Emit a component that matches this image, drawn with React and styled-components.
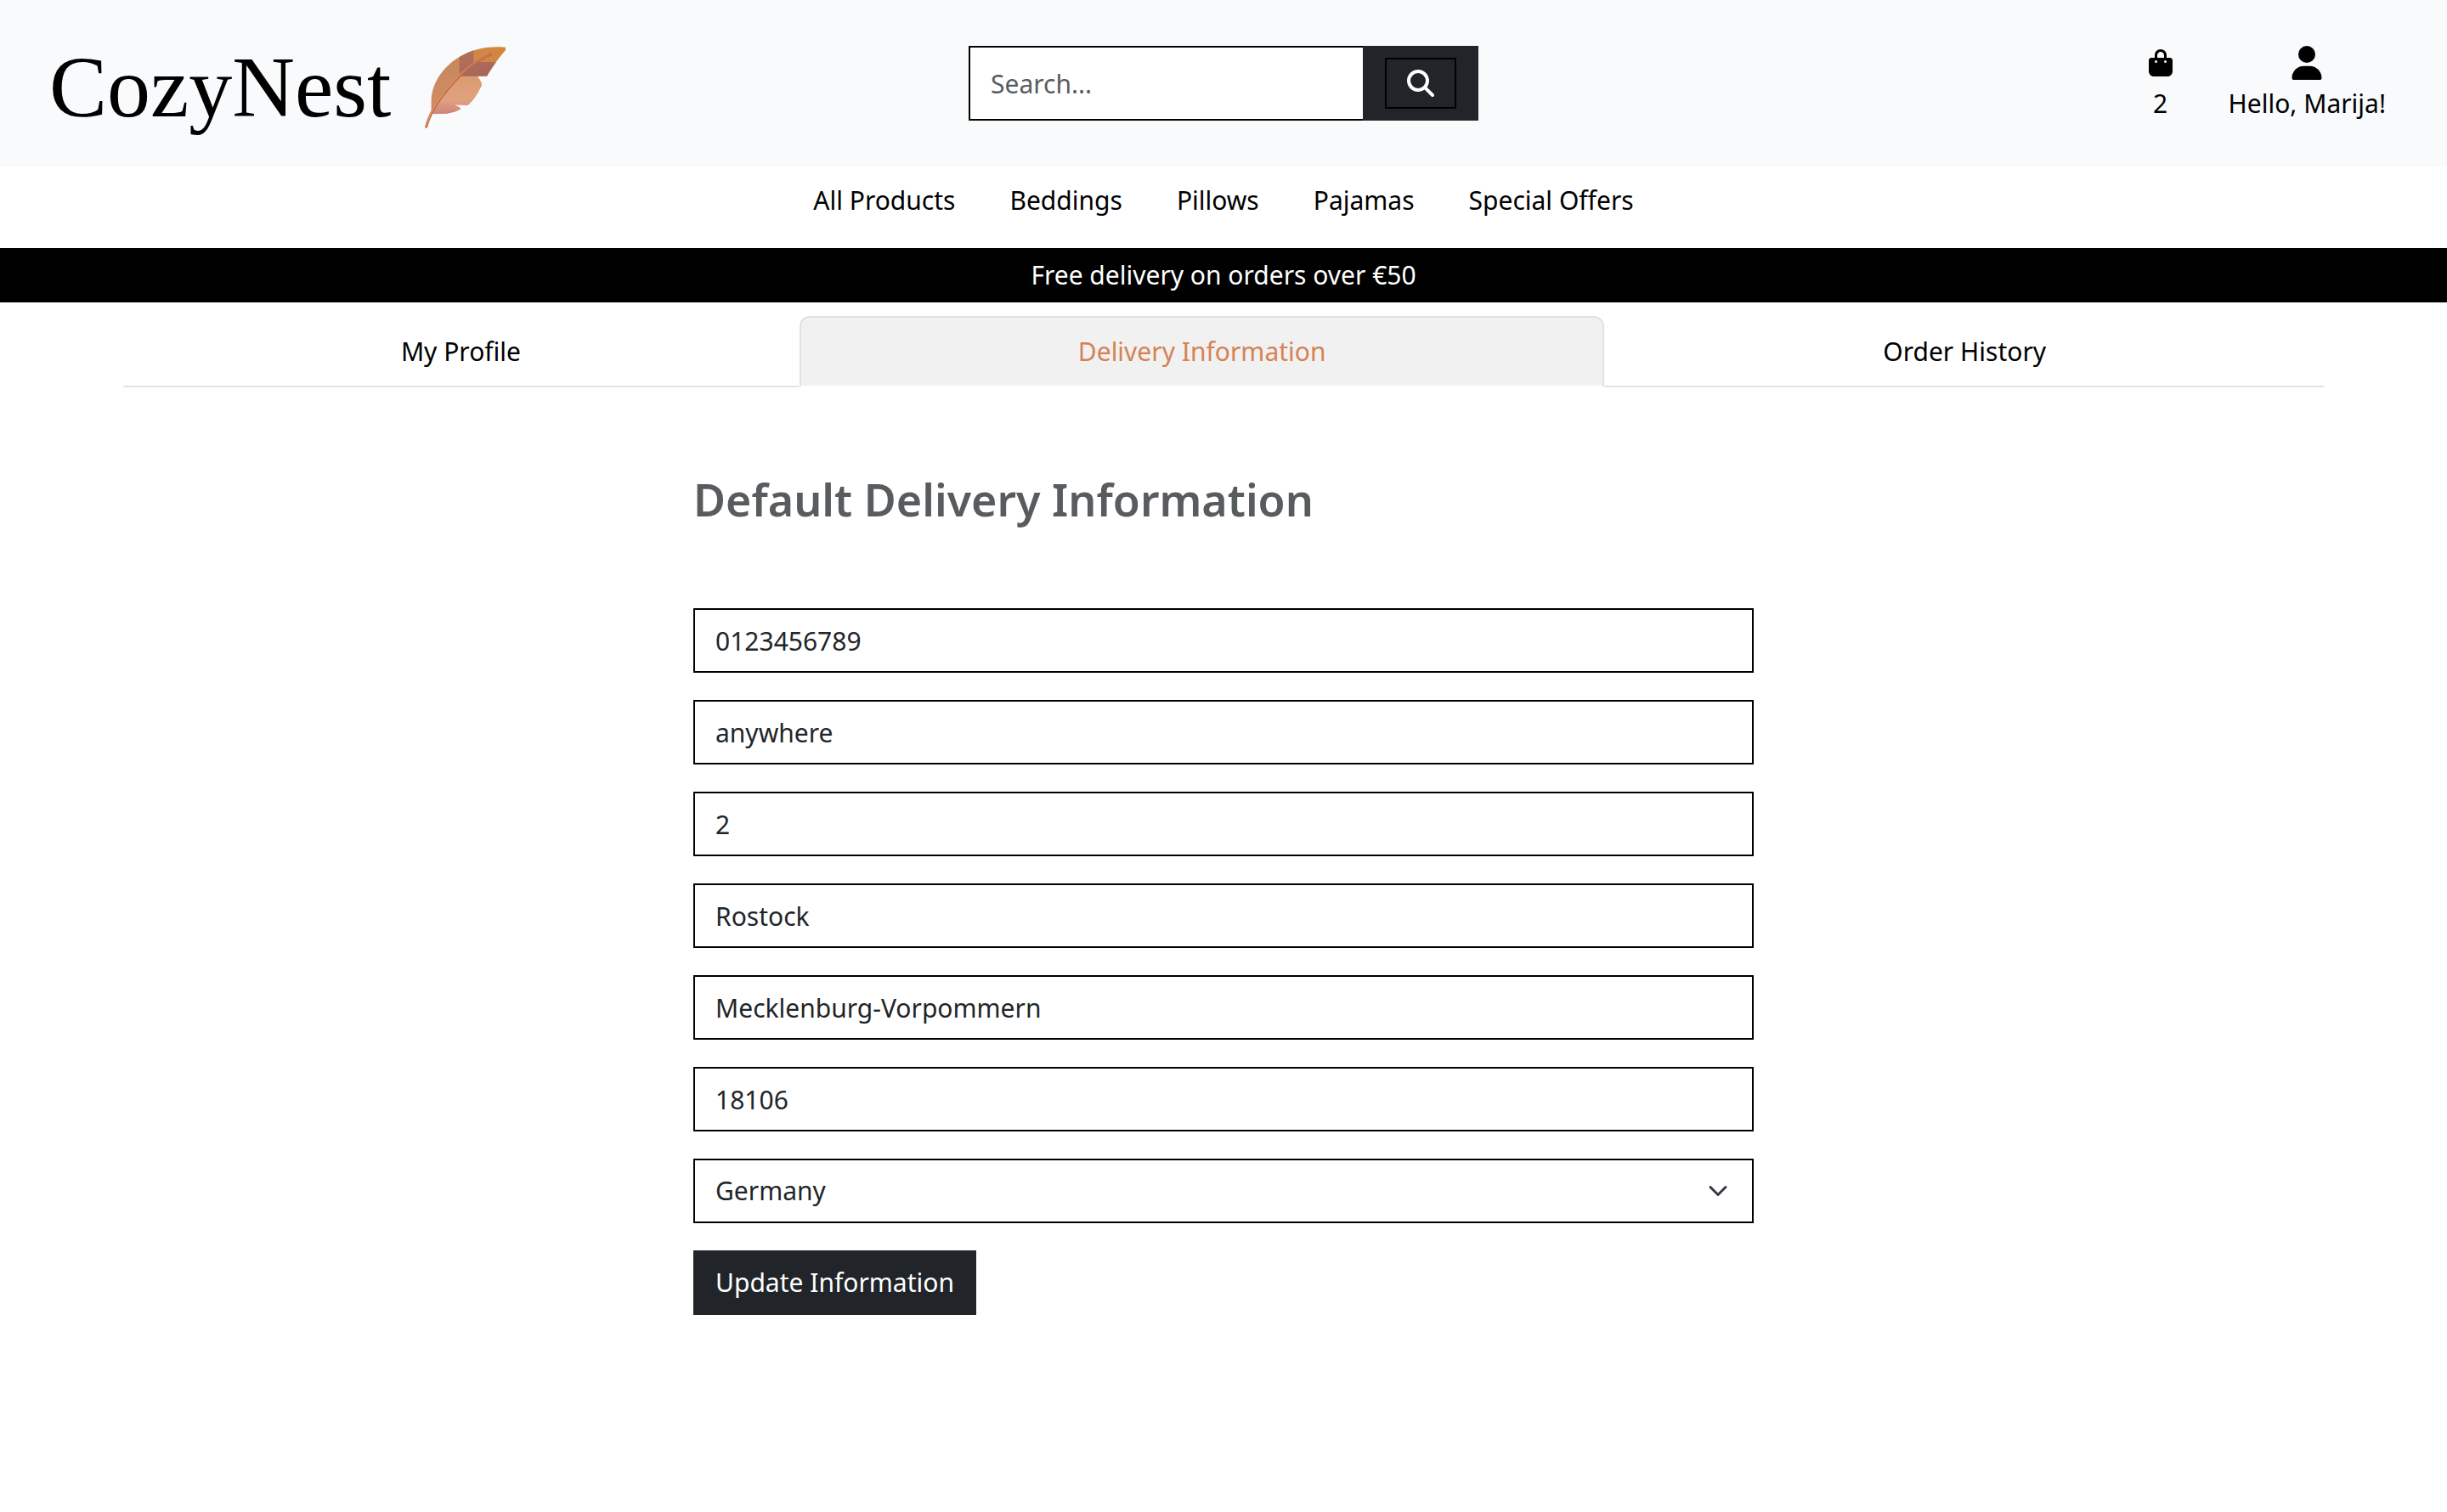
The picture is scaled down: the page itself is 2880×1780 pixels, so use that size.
import React from "react";
import styled, { createGlobalStyle } from "styled-components";
import { FaBagShopping, FaMagnifyingGlass, FaUser } from "react-icons/fa6";

const GlobalStyle = createGlobalStyle`
  *, *::before, *::after { box-sizing: border-box; }
  body {
    margin: 0;
    background: #fff;
    color: #212529;
    font-family: "Noto Sans", "Open Sans", sans-serif;
    font-size: 30px;
    line-height: 48px;
  }
  input, select, button { font: inherit; }
  a { color: inherit; text-decoration: none; }
`;

const Header = styled.header`
  display: grid;
  grid-template-columns: 1fr auto 1fr;
  align-items: center;
  padding: 44px 58px;
  background: #f8fafc;
`;

const Brand = styled.a`
  display: flex;
  align-items: center;
  justify-self: start;
  gap: 40px;
  padding-top: 10px;
  color: #000;
  font-family: "Liberation Serif", serif;
  font-size: 102px;
  line-height: 98px;
`;

const SearchForm = styled.form`
  display: flex;
`;

const SearchInput = styled.input`
  width: 464px;
  height: 88px;
  padding: 0 24px;
  border: 2px solid #000;
  border-right: 0;
  border-radius: 0;
  background: #fff;
  color: #212529;
  &::placeholder { color: #595c5f; opacity: 1; }
`;

const SearchButton = styled.button`
  display: flex;
  align-items: center;
  justify-content: center;
  width: 136px;
  padding: 0;
  border: 0;
  background: #212529;
  color: #fff;
`;

const SearchGlyph = styled.span`
  display: flex;
  align-items: center;
  justify-content: center;
  width: 84px;
  height: 60px;
  border: 2px solid #000;
  font-size: 32px;
`;

const Account = styled.div`
  display: flex;
  justify-self: end;
  gap: 64px;
  padding-right: 14px;
  color: #000;
`;

const AccountLink = styled.a`
  display: flex;
  flex-direction: column;
  align-items: center;
`;

const AccountIcon = styled.span`
  display: flex;
  align-items: center;
  height: 48px;
  font-size: ${(p) => p.$size}px;
`;

const Nav = styled.nav`
  display: flex;
  justify-content: center;
  gap: 64px;
  padding: 16px 0 32px;
  color: #000;
`;

const Banner = styled.p`
  margin: 0;
  padding: 8px;
  background: #000;
  color: #fff;
  text-align: center;
`;

const Tabs = styled.nav`
  display: flex;
  width: 90%;
  margin: 16px auto 0;
`;

const Tab = styled.a`
  flex: 1 1 auto;
  padding: 16px 32px;
  border: 2px solid;
  border-color: ${(p) =>
    p.$active ? "#dee2e6 #dee2e6 #fff" : "transparent transparent #dee2e6"};
  border-radius: ${(p) => (p.$active ? "12px 12px 0 0" : "0")};
  background: ${(p) => (p.$active ? "#f1f1f1" : "transparent")};
  background-clip: padding-box;
  color: ${(p) => (p.$active ? "#d58253" : "#000")};
  text-align: center;
`;

const Main = styled.main`
  max-width: 1248px;
  margin: 0 auto;
  padding: 96px 0;
`;

const Title = styled.h1`
  margin: 0 0 92px;
  color: #595c5f;
  font-size: 52px;
  font-weight: 600;
  line-height: 72px;
`;

const DeliveryForm = styled.form`
  display: flex;
  flex-direction: column;
  align-items: flex-start;
  gap: 32px;
`;

const Field = styled.input`
  width: 100%;
  height: 76px;
  padding: 0 24px;
  border: 2px solid #000;
  border-radius: 0;
  background: #fff;
  color: #212529;
`;

const SelectWrap = styled.div`
  position: relative;
  width: 100%;
`;

const Select = styled(Field).attrs({ as: "select" })`
  display: block;
  appearance: none;
`;

const Chevron = styled.svg`
  position: absolute;
  top: 26px;
  right: 30px;
  width: 24px;
  height: 24px;
  pointer-events: none;
`;

const SubmitButton = styled.button`
  padding: 12px 24px;
  border: 2px solid #212529;
  background: #212529;
  color: #fff;
`;

const Feather = () => (
  <svg width="96" height="96" viewBox="60 48 288 288" aria-hidden="true">
    <defs>
      <linearGradient id="vane" x1="0" y1="1" x2="1" y2="0">
        <stop offset="0" stopColor="#d38c68" />
        <stop offset="0.5" stopColor="#c9895f" />
        <stop offset="1" stopColor="#d68532" />
      </linearGradient>
      <linearGradient id="belly" x1="0.5" y1="0" x2="0.5" y2="1">
        <stop offset="0" stopColor="#d99b6f" />
        <stop offset="0.6" stopColor="#e0a17f" />
        <stop offset="1" stopColor="#cb7b7b" />
      </linearGradient>
      <linearGradient id="patch" x1="0" y1="0" x2="0.6" y2="1">
        <stop offset="0" stopColor="#b0725a" />
        <stop offset="1" stopColor="#a8655a" />
      </linearGradient>
      <linearGradient id="quill" x1="0" y1="1" x2="1" y2="0">
        <stop offset="0" stopColor="#d9805a" />
        <stop offset="0.5" stopColor="#d88a50" />
        <stop offset="1" stopColor="#c8704c" />
      </linearGradient>
      <clipPath id="outline">
        <path d="M345 50C300 46 240 49 182 84C125 118 84 176 82 240L82 285C125 288 162 283 186 268L184 263L163 253L212 254C236 233 250 207 261 183C259 170 251 160 246 152H279C300 118 315 95 345 60Z" />
      </clipPath>
    </defs>
    <g clipPath="url(#outline)">
      <rect x="60" y="40" width="300" height="300" fill="url(#vane)" />
      <path d="M84 285C110 230 150 180 190 147L300 140V300H84Z" fill="url(#belly)" />
      <path d="M182 60H232V102H350V152H182Z" fill="url(#patch)" />
    </g>
    <path d="M65 331C80 270 130 205 186 148C215 118 250 95 293 75" fill="none" stroke="#b9694f" strokeWidth="9" strokeLinecap="round" />
    <path d="M65 329C79 268 128 203 184 146C213 116 250 93 293 73" fill="none" stroke="url(#quill)" strokeWidth="6" strokeLinecap="round" />
    <path d="M68 314C84 264 128 204 183 146" fill="none" stroke="#e9a36d" strokeWidth="2" strokeLinecap="round" />
  </svg>
);

const categories = ["All Products", "Beddings", "Pillows", "Pajamas", "Special Offers"];
const tabs = ["My Profile", "Delivery Information", "Order History"];
const fields = [
  { label: "Phone Number", value: "0123456789" },
  { label: "Street Address 1", value: "anywhere" },
  { label: "Street Address 2", value: "2" },
  { label: "Town or City", value: "Rostock" },
  { label: "County", value: "Mecklenburg-Vorpommern" },
  { label: "Postal Code", value: "18106" },
];

export default function App() {
  return (
    <>
      <GlobalStyle />
      <Header>
        <Brand href="#">
          CozyNest
          <Feather />
        </Brand>
        <SearchForm role="search">
          <SearchInput type="text" placeholder="Search..." aria-label="Search" />
          <SearchButton type="button" aria-label="Submit search">
            <SearchGlyph>
              <FaMagnifyingGlass />
            </SearchGlyph>
          </SearchButton>
        </SearchForm>
        <Account>
          <AccountLink href="#">
            <AccountIcon $size={32}>
              <FaBagShopping />
            </AccountIcon>
            2
          </AccountLink>
          <AccountLink href="#">
            <AccountIcon $size={40}>
              <FaUser />
            </AccountIcon>
            Hello, Marija!
          </AccountLink>
        </Account>
      </Header>
      <Nav>
        {categories.map((name) => (
          <a href="#" key={name}>{name}</a>
        ))}
      </Nav>
      <Banner>Free delivery on orders over €50</Banner>
      <Tabs>
        {tabs.map((name) => (
          <Tab href="#" key={name} $active={name === "Delivery Information"}>{name}</Tab>
        ))}
      </Tabs>
      <Main>
        <Title>Default Delivery Information</Title>
        <DeliveryForm>
          {fields.map(({ label, value }) => (
            <Field key={label} type="text" aria-label={label} defaultValue={value} />
          ))}
          <SelectWrap>
            <Select aria-label="Country" defaultValue="Germany">
              <option>Germany</option>
            </Select>
            <Chevron viewBox="0 0 16 16" aria-hidden="true">
              <path d="m2 5 6 6 6-6" fill="none" stroke="#343a40" strokeWidth="2" strokeLinecap="round" strokeLinejoin="round" />
            </Chevron>
          </SelectWrap>
          <SubmitButton type="button">Update Information</SubmitButton>
        </DeliveryForm>
      </Main>
    </>
  );
}
